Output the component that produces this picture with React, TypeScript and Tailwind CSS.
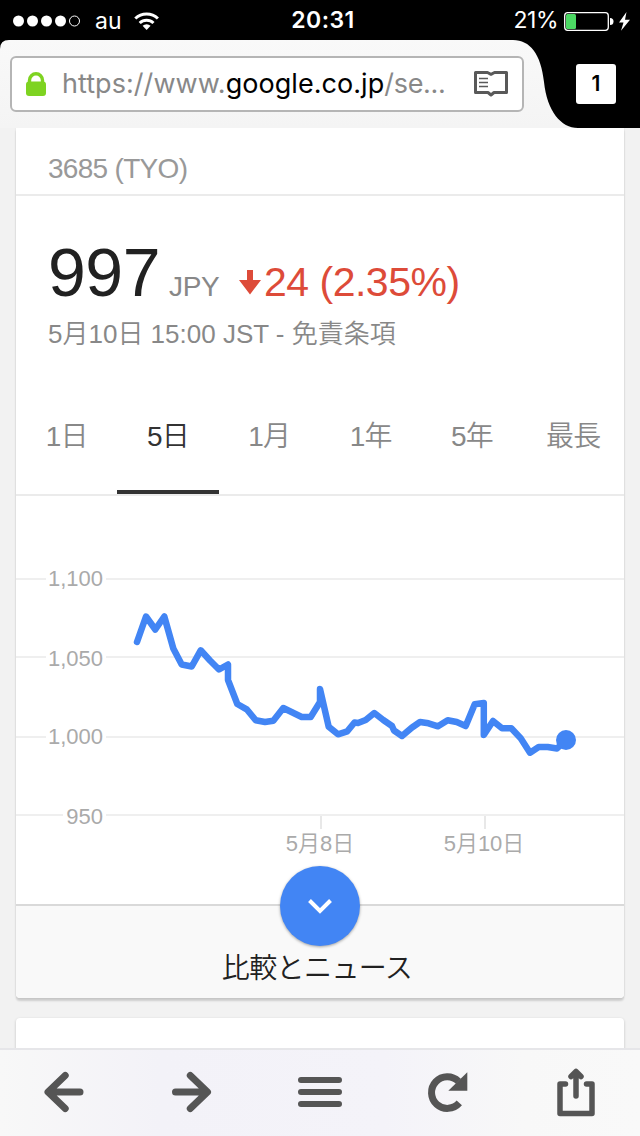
import { ReactNode } from 'react';
import clsx from 'clsx';

const PRICES: [number, number][] = [
  [137, 642], [146, 616.5], [155.3, 629.5], [164.3, 616.5], [173.3, 648.5], [181.7, 664.5],
  [191.7, 666.5], [200.7, 650.3], [210, 660.5], [219, 669.5], [228, 664.5], [228, 680],
  [237.3, 704], [246.7, 709.3], [255.7, 720.3], [265, 722], [273.3, 720.7], [283.3, 708],
  [301.7, 717], [310.7, 717], [320, 702], [320, 689], [328.7, 726.7], [338, 734.3],
  [347.3, 731.3], [354.5, 722.5], [358, 723], [365.7, 720], [374.3, 713], [383.3, 720],
  [392, 726], [394, 730.5], [402, 736], [411.7, 727.7], [420, 722], [428.5, 723.3],
  [438, 726.3], [447.7, 720.3], [456.7, 722], [465.7, 726], [474.7, 704.3], [483.8, 703],
  [483.8, 735], [493, 721], [502, 728.3], [511.3, 728.3], [520.7, 738.3], [530, 752.7],
  [538.7, 747], [547.7, 747], [557, 748.5], [566, 740],
];

const GRID = [
  { label: '1,100', y: 579, baseline: 586 },
  { label: '1,050', y: 657, baseline: 666 },
  { label: '1,000', y: 737, baseline: 744 },
  { label: '950', y: 815, baseline: 824 },
];

const TICKS = [
  { label: '5月8日', x: 321 },
  { label: '5月10日', x: 485 },
];

const TABS = ['1日', '5日', '1月', '1年', '5年', '最長'];

function StatusBar() {
  return (
    <div className="h-10 shrink-0 bg-black text-white font-['Inter',sans-serif] grid grid-cols-3 items-center">
      <div className="flex items-center pl-[13px]">
        <svg width="68" height="12" viewBox="0 0 68 12" fill="#fff">
          <circle cx="5.5" cy="6" r="5.5" />
          <circle cx="19.5" cy="6" r="5.5" />
          <circle cx="33.5" cy="6" r="5.5" />
          <circle cx="47.5" cy="6" r="5.5" />
          <circle cx="61.5" cy="6" r="5" fill="none" stroke="#fff" />
        </svg>
        <span className="ml-[14px] w-[26px] pt-px text-[23px] leading-10 whitespace-nowrap">au</span>
        <svg className="ml-[13px]" width="26" height="20" viewBox="134 10 26 20" fill="none" stroke="#fff" strokeWidth="3">
          <path d="M135.3 17.5a16.2 16.2 0 0 1 22.6 0" />
          <path d="M139.7 22a10 10 0 0 1 13.8 0" />
          <path d="M146.600 29l-4-4.200a5.800 5.800 0 0 1 8 0z" fill="#fff" stroke="none" />
        </svg>
      </div>
      <div className="text-center text-[23px] font-semibold tracking-[0.5px] pl-[6px]">20:31</div>
      <div className="flex items-center justify-end pr-[9px]">
        <span className="text-[23px] tracking-[-0.5px]">21%</span>
        <svg className="ml-[6px]" width="67" height="22" viewBox="564 9 67 22">
          <rect x="564.7" y="11.7" width="43.6" height="17.600" rx="3" fill="none" stroke="#fff" strokeWidth="1.300" />
          <rect x="566" y="13" width="10" height="15" rx="1.500" fill="#4cd964" />
          <path d="M610 17a3.500 3.500 0 0 1 0 7z" fill="#fff" />
          <path d="M626.500 11l-7.500 10.500h4.500l-2.500 8.200 9-11h-5z" fill="#fff" />
        </svg>
      </div>
    </div>
  );
}

function AddressBar() {
  return (
    <div className="relative h-[88px] shrink-0 bg-black font-['Inter',sans-serif]">
      <svg className="absolute inset-0" width="640" height="88" viewBox="0 0 640 88">
        <defs>
          <linearGradient id="bar" x1="0" y1="0" x2="0" y2="1">
            <stop offset="0" stopColor="#f9f9f9" />
            <stop offset="1" stopColor="#f4f4f4" />
          </linearGradient>
        </defs>
        <path d="M0 88V9Q0 0 9 0H513C530 0 541 14 544 42C547 71 561 88 578 88Z" fill="url(#bar)" />
      </svg>
      <div className="relative flex items-start pt-4 pl-[10px]">
        <div className="w-[514px] h-14 flex items-center rounded-md border-2 border-[#b5b5b5] bg-white pl-[14px] pr-[14px]">
          <svg width="20" height="24" viewBox="0 0 20 24">
            <path d="M3.500 12V8.300a6.500 6.500 0 0 1 13 0V12" fill="none" stroke="#7ed321" strokeWidth="3.400" />
            <rect y="9.500" width="20" height="14.500" rx="3" fill="#7ed321" />
          </svg>
          <div className="ml-4 pb-0.5 flex-1 text-[27px] leading-none text-[#888] whitespace-nowrap">
            <span className="tracking-[0.050px]">https://www.</span>
            <span className="tracking-[0.050px] text-black">google.co.jp</span>
            <span className="tracking-[-0.3px]">/se...</span>
          </div>
          <svg width="34" height="26" viewBox="0 0 34 26" fill="none" stroke="#595959" strokeWidth="3" strokeLinejoin="round">
            <path d="M1.500 1.500H13.500L17 3.300L20.500 1.500H32.500V21.500H20L17 24L14 21.500H1.500Z" />
            <path d="M5 7.500H14M5 11.500H14M5 15.500H14" strokeWidth="1.600" />
          </svg>
        </div>
        <div className="ml-[52px] mt-2 w-10 h-10 rounded-[3px] bg-white text-black flex items-center justify-center text-[21px] font-semibold">
          1
        </div>
      </div>
    </div>
  );
}

function Quote() {
  return (
    <div className="h-[180px] px-8 pt-[43px]">
      <div className="flex items-baseline leading-[66px] whitespace-nowrap">
        <span className="w-[121px] text-[68px] tracking-[-0.5px] text-[#212121]">997</span>
        <span className="w-[70px] text-[28px] tracking-[-0.3px] text-[#888]">JPY</span>
        <svg width="22" height="26" viewBox="0 0 22 26" fill="#dd4b39">
          <path d="M8 0h6v10h8L11 24.500 0 10h8z" />
        </svg>
        <span className="ml-[3px] text-[41px] tracking-[-0.5px] text-[#dd4b39]">24 (2.35%)</span>
      </div>
      <div className="-mt-0.5 text-[26px] leading-8 text-[#888] font-[350] whitespace-nowrap">
        5月10日 15:00 JST - 免責条項
      </div>
    </div>
  );
}

function PriceChart() {
  return (
    <svg
      className="block font-['Liberation_Sans','Noto_Sans_CJK_JP',sans-serif] font-[350]"
      width="608"
      height="408"
      viewBox="16 496 608 408"
      fontSize="22"
    >
      {GRID.map((g) => (
        <g key={g.label}>
          <path d={`M16 ${g.y}H${g.label === '950' ? 63 : 46}M106 ${g.y}H624`} stroke="#efefef" strokeWidth="2" />
          <text x="103" y={g.baseline} textAnchor="end" fill="#aaa">
            {g.label}
          </text>
        </g>
      ))}
      {TICKS.map((tick) => (
        <g key={tick.label}>
          <path d={`M${tick.x} 816V829`} stroke="#e8e8e8" strokeWidth="2" />
          <text x={tick.x - 1} y="851" textAnchor="middle" fill="#aaa">
            {tick.label}
          </text>
        </g>
      ))}
      <polyline
        points={PRICES.map((p) => p.join(',')).join(' ')}
        fill="none"
        stroke="#4285f4"
        strokeWidth="6.5"
        strokeLinejoin="round"
        strokeLinecap="round"
      />
      <circle cx="566" cy="740" r="10" fill="#4285f4" />
    </svg>
  );
}

function ToolButton({ label, children }: { label: string; children: ReactNode }) {
  return (
    <button aria-label={label} className="flex-1 flex justify-center pt-[18px]">
      <svg width="48" height="52" viewBox="0 0 48 52" fill="none" stroke="#555" strokeWidth="6" strokeLinecap="round" strokeLinejoin="round">
        {children}
      </svg>
    </button>
  );
}

function Toolbar() {
  return (
    <div className="h-[88px] shrink-0 flex items-start border-t-2 border-[#e6e6e9] bg-[linear-gradient(to_right,#f8f8f8,#f3f2f8_25%,#f4f3f9_60%,#f8f8f8_82%,#f9f9f9)]">
      <ToolButton label="back">
        <path d="M25.200 7.500L8 24L25.200 40.500M9 24H40" strokeWidth="7" />
      </ToolButton>
      <ToolButton label="forward">
        <path d="M22.300 7.500L39.500 24L22.300 40.500M38.500 24H7.500" strokeWidth="7" />
      </ToolButton>
      <ToolButton label="menu">
        <path d="M5 12H43M5 24H43M5 36H43" />
      </ToolButton>
      <ToolButton label="reload">
        <path d="M35.300 34.900A15.800 15.800 0 1 1 34.400 13.300" strokeWidth="7" strokeLinecap="butt" />
        <path d="M43.300 4.300V22.700H24.300Z" fill="#555" stroke="none" />
      </ToolButton>
      <ToolButton label="share">
        <path d="M13.500 16H8V45.500H40V16H34.500" strokeWidth="5.500" />
        <path d="M24 28V4.500M19 8.500L24 3.500L29 8.500" strokeWidth="5.500" />
      </ToolButton>
    </div>
  );
}

export default function App() {
  return (
    <div className="w-[640px] h-[1136px] flex flex-col overflow-hidden bg-[#f2f2f2]" lang="ja">
      <StatusBar />
      <AddressBar />
      <div className="h-[920px] px-4 overflow-hidden font-['Liberation_Sans','Noto_Sans_CJK_JP',sans-serif]">
        <div className="h-[870px] rounded-b bg-white shadow-[0_3px_2px_rgba(0,0,0,0.15),0_0_2px_rgba(0,0,0,0.12)]">
          <div className="h-[68px] border-b-2 border-[#ebebeb] pl-8 pt-[25px] text-[28px] leading-8 tracking-[-0.7px] text-[#999] whitespace-nowrap">
            3685 (TYO)
          </div>
          <Quote />
          <div className="h-[120px] flex border-b-2 border-[#ebebeb] text-[28px] tracking-[-0.8px] font-[350]">
            {TABS.map((tab, i) => (
              <div
                key={tab}
                className={clsx(
                  'flex-1 pt-[41px] leading-10 text-center border-b-4',
                  i === 1 ? 'border-[#333] text-[#333]' : 'border-transparent text-[#888]'
                )}
              >
                {tab}
              </div>
            ))}
          </div>
          <PriceChart />
          <div className="relative h-[94px] rounded-b border-t-2 border-[#d9d9d9] bg-[#f9f9f9]">
            <div className="absolute left-[264px] -top-10 w-20 h-20 rounded-full bg-[#4285f4] shadow-[0_1px_3px_rgba(0,0,0,0.35)] flex items-center justify-center">
              <svg width="26" height="18" viewBox="0 0 26 18" fill="none" stroke="#fff" strokeWidth="4">
                <path d="M2.500 3.500L13 14L23.500 3.500" />
              </svg>
            </div>
            <div className="pt-[43px] pr-1.5 text-center text-[28px] tracking-[-0.6px] leading-10 font-[350] text-[#212121]">
              比較とニュース
            </div>
          </div>
        </div>
        <div className="mt-5 h-16 rounded bg-white shadow-[0_1px_3px_rgba(0,0,0,0.2)]" />
      </div>
      <Toolbar />
    </div>
  );
}
